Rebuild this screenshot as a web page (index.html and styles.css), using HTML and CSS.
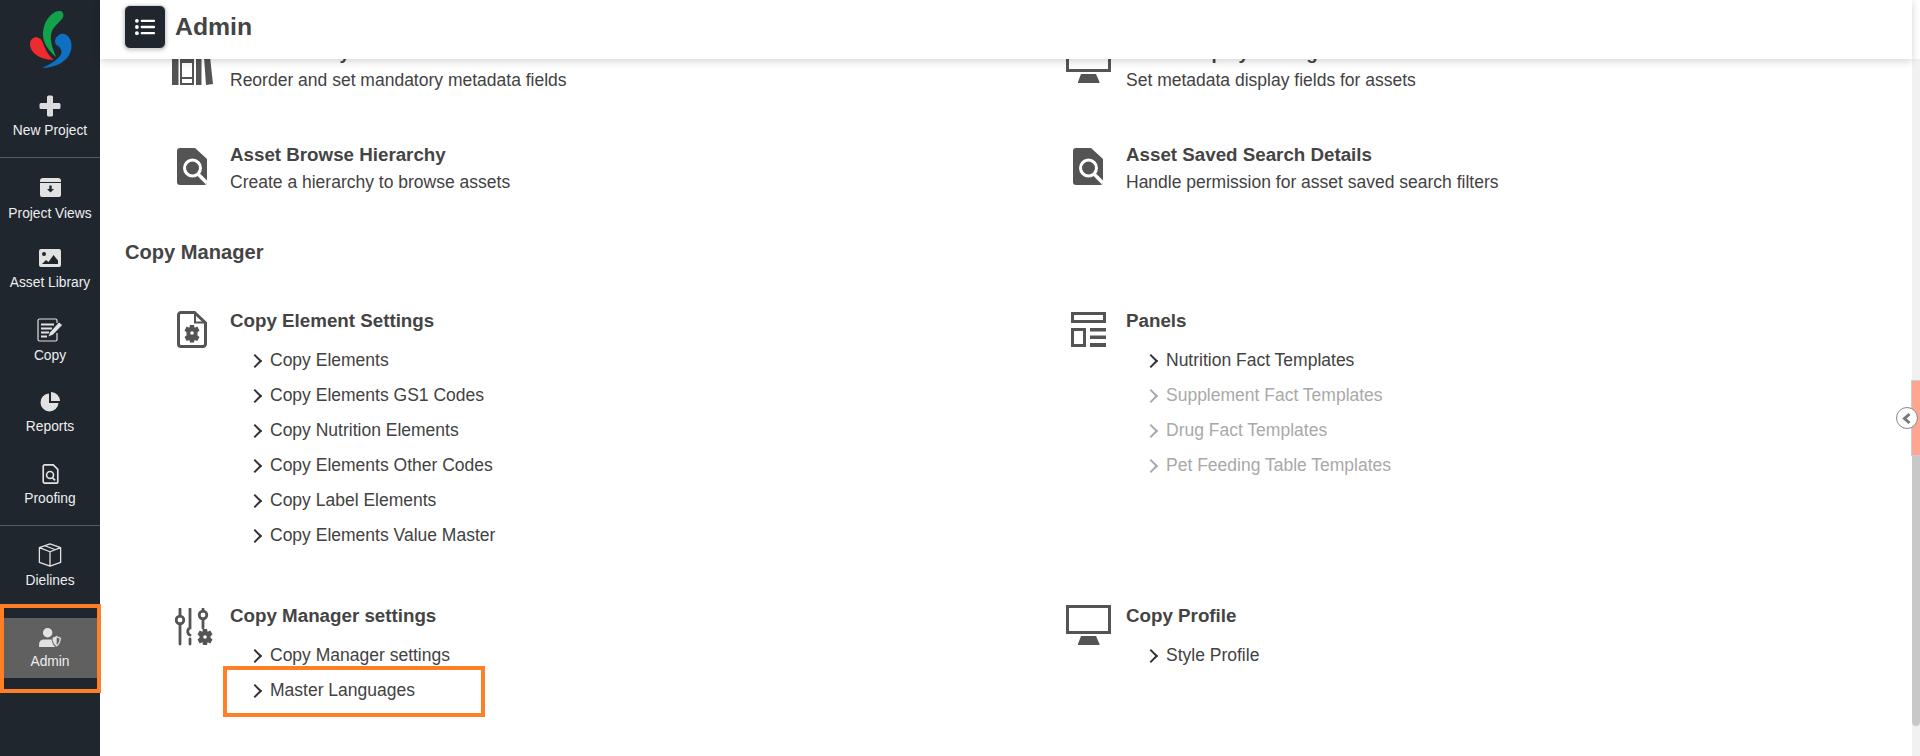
FILE: index.html
```html
<!DOCTYPE html>
<html lang="en">
<head>
<meta charset="utf-8">
<title>Admin</title>
<link rel="stylesheet" href="styles.css">
</head>
<body>
<div class="app">
  <nav class="sidebar">
    <div class="logo">
      <svg width="43" height="57" viewBox="0 0 43 57"><path d="M29 0C34-1 36 4 33 8 29 13 23 16 22 24 21 33 25 40 27 46 20 40 13 32 14 21 15 11 21 2 29 0Z" fill="#12a24b"/><path d="M1 33C1 28 6 25 10 27 14 29 14 33 16 37 18 42 21 46 25 49 17 49 8 46 4 41 2 38 1 36 1 33Z" fill="#ee2b2f"/><path d="M26 30C27 25 31 22 35 23 40 24 43 30 42.500 36 42 44 36 51 28 54 23 56 18 57 13 57 20 54 27 50 31 45 34 41 32 37 29 35 27 34 26 32 26 30Z" fill="#0f6fc0"/></svg>
    </div>
    <a class="nav-item n-new"><svg width="22" height="22" viewBox="0 0 22 22"><path d="M8 2a1.500 1.500 0 0 1 1.500-1.500h3A1.500 1.500 0 0 1 14 2v6h6a1.500 1.500 0 0 1 1.500 1.500v3A1.500 1.500 0 0 1 20 14h-6v6a1.500 1.500 0 0 1-1.500 1.500h-3A1.500 1.500 0 0 1 8 20v-6H2A1.500 1.500 0 0 1 .5 12.500v-3A1.500 1.500 0 0 1 2 8h6z" fill="#dcdcdc"/></svg><span>New Project</span></a>
    <div class="nav-rule"></div>
    <div class="nav-group">
      <a class="nav-item n-views"><svg width="21" height="19" viewBox="0 0 21 19"><path d="M3 0h15a3 3 0 0 1 3 3v1H0V3a3 3 0 0 1 3-3zM0 5h21v12a2 2 0 0 1-2 2H2a2 2 0 0 1-2-2z" fill="#e2e2e2"/><path d="M9.300 7.500h2.400v3.500h2.300l-3.500 3.500L7 11h2.300z" fill="#20262e"/></svg><span>Project Views</span></a>
      <a class="nav-item n-lib"><svg width="22" height="18" viewBox="0 0 22 18"><rect width="22" height="18" rx="2" fill="#e2e2e2"/><circle cx="5" cy="5" r="2" fill="#20262e"/><path d="M3 15l4-4 2.500 2 5-7L19 11.500V15z" fill="#20262e"/></svg><span>Asset Library</span></a>
      <a class="nav-item n-copy"><svg width="26" height="24" viewBox="0 0 26 24"><path d="M20 5V2.500A1.500 1.500 0 0 0 18.500 1h-16A1.500 1.500 0 0 0 1 2.500v19A1.500 1.500 0 0 0 2.500 23h16a1.500 1.500 0 0 0 1.500-1.500V15" fill="none" stroke="#e2e2e2" stroke-width="1.200"/><path d="M4 6.500h13M4 10.500h11M4 14.500h8M4 18.500h6" stroke="#e2e2e2" stroke-width="1.800"/><path d="M11 19l1.500-4.500L22 4l3.500 3L16 17z" fill="#e2e2e2" stroke="#20262e" stroke-width=".8"/></svg><span>Copy</span></a>
      <a class="nav-item n-rep"><svg width="20" height="20" viewBox="0 0 20 20"><path d="M9 1.500a9 9 0 1 0 9.500 9.500H9z" fill="#e2e2e2"/><path d="M11 0a9 9 0 0 1 9 9h-9z" fill="#e2e2e2"/></svg><span>Reports</span></a>
      <a class="nav-item n-proof"><svg width="17" height="20" viewBox="0 0 18 22"><path d="M2.500 1H12l5 5v14a1 1 0 0 1-1 1H2.500A1.500 1.500 0 0 1 1 19.500v-17A1.500 1.500 0 0 1 2.500 1z" fill="none" stroke="#e2e2e2" stroke-width="1.800"/><circle cx="8.500" cy="12" r="3.800" fill="none" stroke="#e2e2e2" stroke-width="1.800"/><path d="M11 15l3 3" stroke="#e2e2e2" stroke-width="2"/></svg><span>Proofing</span></a>
    </div>
    <div class="nav-rule"></div>
    <div class="nav-group">
      <a class="nav-item n-die"><svg width="24" height="24" viewBox="0 0 26 26"><path d="M13 1l11.500 4v16L13 25 1.500 21V5z M1.500 5L13 9.500 24.500 5M13 9.500V25M7.500 3l11.500 4.300" fill="none" stroke="#e2e2e2" stroke-width="1.400" stroke-linejoin="round"/></svg><span>Dielines</span></a>
      <a class="nav-item n-active"><svg width="23" height="19" viewBox="0 0 24 20"><circle cx="9" cy="5" r="5" fill="#e2e2e2"/><path d="M0 20v-3c0-3 2-5 5-5h8c1 0 1.500.5 1.500 1v2c0 2 1 4 2.500 5z" fill="#e2e2e2"/><path d="M18.500 8l5 2c0 5-2 8-5 10-3-2-5-5-5-10z" fill="#e2e2e2" stroke="#606060"/><path d="M18.500 10l3 1c0 3-1 5-3 7z" fill="#606060"/></svg><span>Admin</span></a>
    </div>
    <div class="mark mark-nav"></div>
  </nav>
  <main class="main">
    <header class="topbar">
      <button class="menu-btn"><svg width="20" height="18" viewBox="0 0 21 18"><g fill="#fff"><circle cx="2" cy="2.500" r="2"/><circle cx="2" cy="9" r="2"/><circle cx="2" cy="15.500" r="2"/><rect x="6" y="1.300" width="15" height="2.400" rx="1"/><rect x="6" y="7.800" width="15" height="2.400" rx="1"/><rect x="6" y="14.300" width="15" height="2.400" rx="1"/></g></svg></button>
      <h1>Admin</h1>
    </header>
    <div class="content">
      <section class="grid grid-top">
        <div class="card card-cut">
          <div class="card-ic"><svg width="41" height="42" viewBox="0 0 41 42"><path d="M0 0h6.500v42H0zM8 0h14v42H8zM10 20v14h10V20zM10 36v4h10v-4z" fill="#545454" fill-rule="evenodd"/><path d="M24 0h5.500v42H24z" fill="#545454"/><path d="M31 0h5.500L41 41l-7 1z" fill="#545454"/></svg></div>
          <div><h3>Asset Library Metadata</h3><p>Reorder and set mandatory metadata fields</p></div>
        </div>
        <div class="card card-cut">
          <div class="card-ic"><svg width="45" height="40" viewBox="0 0 45 40"><path d="M0 0h45v29H0zM3 3v23h39V3z" fill="#545454" fill-rule="evenodd"/><path d="M15 31h15l3.500 8v1H12v-1z" fill="#545454"/></svg></div>
          <div><h3>Asset Display Settings</h3><p>Set metadata display fields for assets</p></div>
        </div>
        <div class="card card-search">
          <div class="card-ic"><svg width="30" height="37" viewBox="0 0 30 37"><path d="M3 0h15l12 11v23a3 3 0 0 1-3 3H3a3 3 0 0 1-3-3V3a3 3 0 0 1 3-3z" fill="#545454"/><circle cx="15.500" cy="20" r="8" fill="none" stroke="#fff" stroke-width="3"/><path d="M21 26l9 9" stroke="#fff" stroke-width="3.500"/></svg></div>
          <div><h3>Asset Browse Hierarchy</h3><p>Create a hierarchy to browse assets</p></div>
        </div>
        <div class="card card-search">
          <div class="card-ic"><svg width="30" height="37" viewBox="0 0 30 37"><path d="M3 0h15l12 11v23a3 3 0 0 1-3 3H3a3 3 0 0 1-3-3V3a3 3 0 0 1 3-3z" fill="#545454"/><circle cx="15.500" cy="20" r="8" fill="none" stroke="#fff" stroke-width="3"/><path d="M21 26l9 9" stroke="#fff" stroke-width="3.500"/></svg></div>
          <div><h3>Asset Saved Search Details</h3><p>Handle permission for asset saved search filters</p></div>
        </div>
      </section>
      <h2>Copy Manager</h2>
      <section class="grid grid-copy">
        <div class="card">
          <div class="card-ic ic-file"><svg width="30" height="37" viewBox="0 0 30 37"><path d="M4 1.500h13.500L28.500 12v21A2.500 2.500 0 0 1 26 35.500H4A2.500 2.500 0 0 1 1.500 33V4A2.500 2.500 0 0 1 4 1.500z" fill="none" stroke="#545454" stroke-width="3"/><path d="M18 2v9.500h10" fill="none" stroke="#545454" stroke-width="2"/><path d="M15 22m-2-8h4l.6 2.700 2.700-1.100 2.200 3.900-2 1.700v3.200l2 1.700-2.200 3.900-2.700-1.100-.6 2.700h-4l-.6-2.700-2.700 1.100-2.200-3.900 2-1.700v-3.200l-2-1.700 2.200-3.900 2.700 1.100z" fill="#545454"/><circle cx="15" cy="22" r="1.800" fill="#fff"/></svg></div>
          <div class="card-body"><h3>Copy Element Settings</h3>
            <ul>
              <li>Copy Elements</li><li>Copy Elements GS1 Codes</li><li>Copy Nutrition Elements</li><li>Copy Elements Other Codes</li><li>Copy Label Elements</li><li>Copy Elements Value Master</li>
            </ul>
          </div>
        </div>
        <div class="card">
          <div class="card-ic ic-panels"><svg width="35" height="35" viewBox="0 0 35 35"><g fill="#545454"><path d="M0 0h35v11H0zM3 3v5h29V3z" fill-rule="evenodd"/><path d="M0 16h15v19H0zM3 19v13h9V19z" fill-rule="evenodd"/><rect x="19" y="16" width="16" height="3.500"/><rect x="19" y="23.500" width="16" height="3.500"/><rect x="19" y="31" width="16" height="4"/></g></svg></div>
          <div class="card-body"><h3>Panels</h3>
            <ul>
              <li>Nutrition Fact Templates</li><li class="off">Supplement Fact Templates</li><li class="off">Drug Fact Templates</li><li class="off">Pet Feeding Table Templates</li>
            </ul>
          </div>
        </div>
        <div class="card">
          <div class="card-ic ic-sliders"><svg width="38" height="38" viewBox="0 0 38 38"><g stroke="#545454" fill="none" stroke-width="2.800" stroke-linecap="round"><path d="M5 1v7M5 16v20"/><circle cx="5" cy="12" r="3.800"/><path d="M15 1v19c-3 1-3 6 0 7M15 31v5"/><path d="M28 1v2M28 11v9"/><circle cx="28" cy="7" r="3.800"/></g><path d="M28 21h4l.6 2.700 2.700-1.100 2.200 3.900-2 1.700v1.600l2 1.700-2.200 3.900-2.700-1.100-.6 2.700h-4l-.6-2.700-2.700 1.100-2.200-3.900 2-1.700v-1.600l-2-1.700 2.200-3.900 2.700 1.100z" fill="#545454"/><circle cx="30" cy="29" r="1.800" fill="#fff"/></svg></div>
          <div class="card-body"><h3>Copy Manager settings</h3>
            <ul>
              <li>Copy Manager settings</li>
              <li class="marked">Master Languages<span class="mark mark-li"></span></li>
            </ul>
          </div>
        </div>
        <div class="card">
          <div class="card-ic"><svg width="45" height="40" viewBox="0 0 45 40"><path d="M0 0h45v29H0zM3 3v23h39V3z" fill="#545454" fill-rule="evenodd"/><path d="M15 31h15l3.500 8v1H12v-1z" fill="#545454"/></svg></div>
          <div class="card-body"><h3>Copy Profile</h3>
            <ul><li>Style Profile</li></ul>
          </div>
        </div>
      </section>
    </div>
  </main>
  <div class="scrollbar">
    <div class="thumb"></div>
    <div class="thumb-rest"></div>
    <button class="collapse"><svg width="12" height="13" viewBox="0 0 12 13"><path d="M8.500 2L3.500 6.500l5 4.500" fill="none" stroke="#777" stroke-width="3"/></svg></button>
  </div>
</div>
</body>
</html>
```
FILE: styles.css
```css
* { box-sizing: border-box; }
html, body { margin: 0; height: 100%; overflow: hidden; background: #fff; }
body { font-family: "Liberation Sans", Arial, sans-serif; color: #3b3b3b; }
.app { display: flex; height: 756px; position: relative; }

.sidebar { width: 100px; flex: none; background: #20262e; display: flex; flex-direction: column; position: relative; }
.logo { height: 79px; padding: 11px 0 0 29px; }
.nav-item { display: flex; flex-direction: column; align-items: center; color: #eee; font-size: 13.800px; line-height: 15px; }
.nav-item svg { display: block; flex: none; }
.nav-rule { height: 1px; background: #555a60; flex: none; }
.nav-group { display: flex; flex-direction: column; padding-bottom: 18.500px; }
.n-new { height: 78px; padding-top: 16px; gap: 5.500px; }
.n-views { margin-top: 20px; gap: 8.500px; }
.n-lib { margin-top: 28.500px; gap: 8px; }
.n-copy { margin-top: 27.500px; gap: 6px; }
.n-rep { margin-top: 29px; gap: 7.500px; }
.n-proof { margin-top: 29.500px; gap: 7.500px; }
.n-die { margin-top: 17px; gap: 6.500px; }
.n-active { margin-top: 29.500px; height: 60px; padding-top: 10px; gap: 7.500px; background: #606060; }

.mark { position: absolute; border: 4.500px solid #ff7f27; pointer-events: none; }
.mark-nav { left: 0; top: 604px; width: 101px; height: 89px; }

.main { flex: 1; min-width: 0; display: flex; flex-direction: column; position: relative; }
.topbar { height: 59px; display: flex; align-items: center; gap: 9px; padding: 5px 0 10px 24px; background: #fff; box-shadow: 0 2px 8px rgba(0,0,0,.18); position: relative; z-index: 2; flex: none; }
.menu-btn { width: 42px; height: 44px; background: #20262e; border: 1px solid #d8d8d8; border-radius: 6px; padding: 0; display: flex; align-items: center; justify-content: center; box-shadow: 0 1px 4px rgba(0,0,0,.25); }
.topbar h1 { margin: 0; font-size: 24.800px; line-height: 30px; font-weight: 700; color: #444; }

.content { flex: 1; overflow: hidden; padding-left: 25px; }
.grid { display: grid; grid-template-columns: 896px 1fr; }
.grid-top { margin-top: -17px; }
.grid-copy { margin-top: 47px; grid-template-rows: 295px auto; }
.card { display: flex; }
.card-ic { width: 105px; flex: none; display: flex; justify-content: center; align-items: flex-start; padding-left: 29px; }
.card h3 { margin: 0; font-size: 18.750px; line-height: 22px; font-weight: 700; color: #444; white-space: nowrap; }
.card p { margin: 6px 0 0; font-size: 17.500px; line-height: 20px; color: #424242; white-space: nowrap; }
.card-cut { height: 102px; }
.card-cut .card-ic { padding-top: 1px; }
.card-search { height: 97px; }
.card-search .card-ic { padding-top: 4px; }
.ic-file { padding-top: 1px; }
.ic-panels { padding-top: 2px; }
.ic-sliders { padding-top: 3px; padding-left: 33px; }
h2 { margin: 0; font-size: 20.100px; line-height: 22px; font-weight: 700; color: #444; }
.card-body { flex: 1; }
ul { list-style: none; margin: 11px 0 0; padding: 0; }
li { position: relative; font-size: 17.500px; line-height: 35px; padding-left: 40px; color: #424242; white-space: nowrap; }
li::before { content: ""; position: absolute; left: 20px; top: 12.500px; width: 8px; height: 8px; border-top: 2px solid #333; border-right: 2px solid #333; transform: rotate(45deg); }
li.off { color: #a9a9a9; }
li.off::before { border-color: #a9a9a9; }
.mark-li { left: -7px; top: -7px; width: 262px; height: 51px; }

.scrollbar { width: 8px; flex: none; position: relative; background: #f1f1f1; margin-top: 59px; }
.thumb { position: absolute; left: -1px; right: 0; top: 321px; height: 76px; background: #ffa592; border: 1px solid #ccc; border-right: 0; }
.thumb-rest { position: absolute; left: 0; right: 0; top: 397px; height: 270px; background: #c8c8c8; border-radius: 0 0 4px 4px; }
.collapse { position: absolute; left: -16px; top: 348px; width: 22px; height: 22px; border-radius: 50%; background: #fff; border: 1px solid #888; padding: 0; display: flex; align-items: center; justify-content: center; }
```
